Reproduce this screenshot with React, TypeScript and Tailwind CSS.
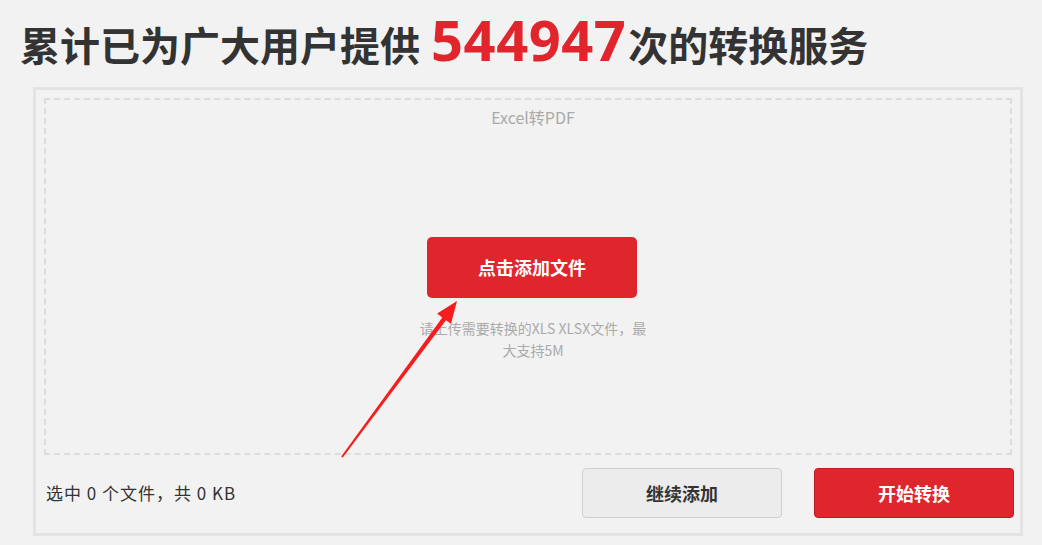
import React from 'react';

const cjk = { fontFamily: '"Noto Sans CJK SC", "Noto Sans", sans-serif' };

// hand-drawn style annotation arrow pointing at the upload button
function Arrow() {
    return (
        <svg className="absolute left-0 top-0 pointer-events-none" width="1042" height="545" viewBox="0 0 1042 545">
            <polygon
                points="341.2,456.4 442.3,317.4 437.2,313.6 457,301 451,323.8 446,320.2 342.8,457.6"
                fill="#f51d1d"
            />
        </svg>
    );
}

export default function App() {
    return (
        <div className="relative w-full min-h-[545px] bg-[#f2f2f2] text-[#333]" style={cjk}>
            {/* Header */}
            <div className="h-[87px] flex items-center pl-[20px] pb-[10px]">
                <h1 className="leading-none font-bold text-[40px] text-[#333] whitespace-nowrap">
                    累计已为广大用户提供{' '}
                    <span
                        className="text-[56px] text-[#e0262c] tracking-[0.5px] mx-[2px]"
                        style={{ fontFamily: '"Open Sans", sans-serif' }}
                    >
                        544947
                    </span>
                    次的转换服务
                </h1>
            </div>

            {/* Upload box */}
            <div className="ml-[33px] w-[990px] border-[3px] border-[#e3e3e3] p-2 pb-[15px]">
                <div className="h-[357px] border-2 border-dashed border-[#dcdcdc] flex flex-col items-center">
                    <div className="pt-[5px] text-[16px] leading-[24px] text-[#aaa] ml-[10px]">Excel转PDF</div>
                    <button
                        type="button"
                        className="mt-[108px] ml-[8px] w-[210px] h-[61px] rounded-[5px] bg-[#df262d] text-white text-[18px] font-bold"
                    >
                        点击添加文件
                    </button>
                    <p className="mt-[19px] ml-[10px] text-[14px] leading-[22px] text-[#aaa] text-center whitespace-nowrap">
                        请上传需要转换的XLS XLSX文件，最
                        <br />
                        大支持5M
                    </p>
                </div>

                {/* Footer */}
                <div className="mt-[13px] flex items-center">
                    <div className="pl-[2px] text-[17px] tracking-[1px] text-[#333]">选中 0 个文件，共 0 KB</div>
                    <div className="ml-auto -mr-[2px] flex gap-[32px]">
                        <button
                            type="button"
                            className="w-[200px] h-[50px] rounded-[4px] border border-[#cfcfcf] bg-[#ececec] text-[18px] font-bold text-[#333]"
                        >
                            继续添加
                        </button>
                        <button
                            type="button"
                            className="w-[200px] h-[50px] rounded-[4px] border border-[#b81e24] bg-[#df262d] text-[18px] font-bold text-white"
                        >
                            开始转换
                        </button>
                    </div>
                </div>
            </div>

            <Arrow />
        </div>
    );
}
